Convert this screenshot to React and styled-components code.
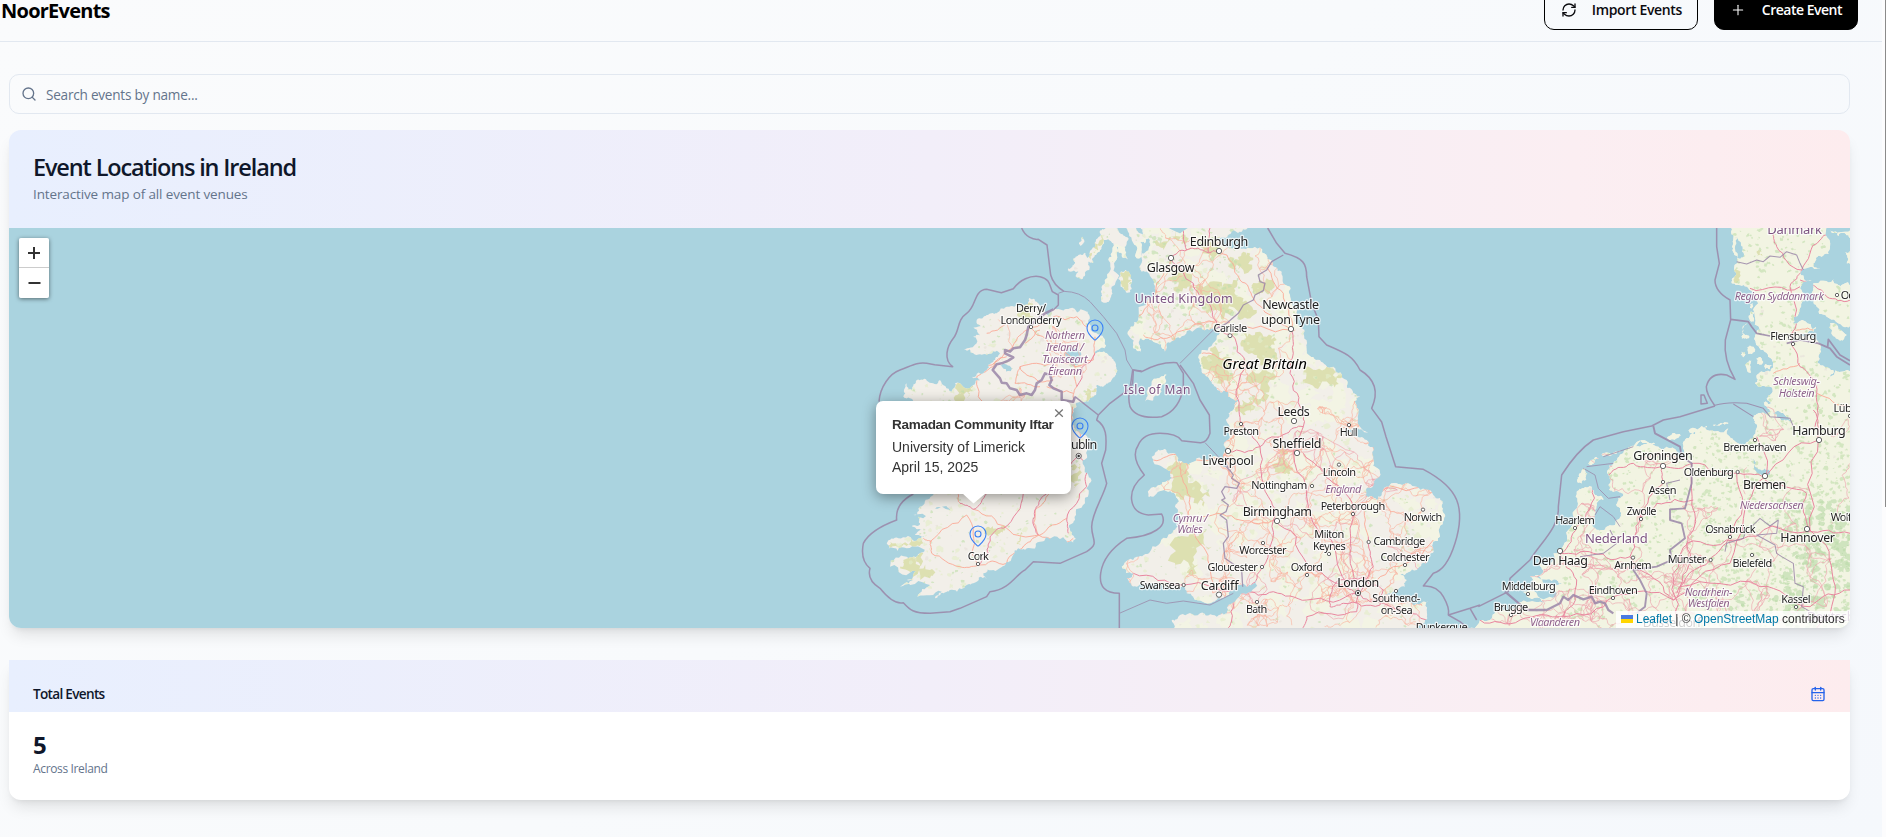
import React from "react";
import styled, { createGlobalStyle } from "styled-components";
import { RefreshCw, Plus, Search, CalendarDays, MapPin } from "lucide-react";

const GlobalStyle = createGlobalStyle`
  * { box-sizing: border-box; }
  body {
    margin: 0;
    overflow: hidden;
    background: #f9fafc;
    color: #0f172a;
    font-family: "Open Sans", "Noto Sans", sans-serif;
  }
`;

const Page = styled.div`
  display: flex;
  height: 837px;
  overflow: hidden;
`;

const Content = styled.div`
  flex: 1;
  min-width: 0;
  height: 837px;
  background: linear-gradient(135deg, #fafbfc 0%, #f8fafc 50%, #f5f8fc 100%);
`;

const ScrollTrack = styled.div`
  width: 4px;
  display: flex;
  justify-content: flex-end;
  background: #fcfcfd;
`;

const ScrollThumb = styled.div`
  width: 1px;
  height: 507px;
  background: #8b8b8b;
`;

const TopBar = styled.header`
  display: flex;
  align-items: flex-start;
  justify-content: space-between;
  height: 64px;
  margin-top: -22px;
  padding: 12px 24px 11px 1px;
  border-bottom: 1px solid #e2e8f0;
`;

const Brand = styled.div`
  padding-top: 7px;
  font-size: 20px;
  line-height: 28px;
  font-weight: 700;
  letter-spacing: -0.75px;
  color: #000;
`;

const Actions = styled.div`
  display: flex;
  gap: 16px;
`;

const Button = styled.button`
  display: flex;
  align-items: center;
  justify-content: space-between;
  width: ${(p) => p.$width}px;
  height: 40px;
  padding: 0 15px 0 ${(p) => (p.$solid ? 15 : 16)}px;
  border: 1px solid #000;
  border-radius: 10px;
  background: ${(p) => (p.$solid ? "#000" : "transparent")};
  color: ${(p) => (p.$solid ? "#fff" : "#0b0b0f")};
  font: 600 14px/20px "Open Sans", "Noto Sans", sans-serif;
  letter-spacing: ${(p) => p.$track}px;
  white-space: nowrap;
`;

const Main = styled.main`
  display: flex;
  flex-direction: column;
  width: 1841px;
  margin: 32px 0 0 9px;
`;

const SearchBox = styled.label`
  display: flex;
  align-items: center;
  gap: 9px;
  height: 40px;
  padding: 0 11px;
  border: 1px solid #e2e8f0;
  border-radius: 10px;
  color: #64748b;
  font-size: 13.6px;
  letter-spacing: -0.24px;
  svg { margin-top: -1px; }
  span { padding-top: 1px; }
`;

const gradient = "linear-gradient(90deg, #e8effe 0%, #f2eef9 50%, #fbeef2 85%, #fdecee 100%)";
const shadow = "0 10px 15px -3px rgba(0,0,0,0.1), 0 4px 6px -4px rgba(0,0,0,0.1)";

const MapCard = styled.section`
  margin-top: 16px;
  border-radius: 12px;
  overflow: hidden;
  box-shadow: ${shadow};
`;

const MapHeader = styled.div`
  height: 98px;
  padding: 23px 24px;
  background: ${gradient};
`;

const Title = styled.h2`
  margin: 0;
  font-size: 23.5px;
  line-height: 28px;
  font-weight: 600;
  letter-spacing: -1.15px;
`;

const Subtitle = styled.p`
  margin: 3px 0 0;
  font-size: 13.5px;
  line-height: 20px;
  letter-spacing: -0.13px;
  color: #64748b;
`;

const MapArea = styled.div`
  position: relative;
  height: 400px;
  background: #aad3df;
  overflow: hidden;
  font-family: "Liberation Sans", Arial, sans-serif;
`;

const MapDrawing = styled.svg`
  display: block;
`;

const Zoom = styled.div`
  position: absolute;
  top: 10px;
  left: 10px;
  display: flex;
  flex-direction: column;
  border-radius: 2px;
  overflow: hidden;
  box-shadow: 0 1px 4px rgba(0, 0, 0, 0.5);
`;

const ZoomButton = styled.div`
  display: flex;
  align-items: center;
  justify-content: center;
  width: 30px;
  height: 30px;
  background: #fff;
  border-bottom: ${(p) => (p.$divider ? "1px solid #ccc" : "0")};
`;

const Pin = styled(MapPin)`
  position: absolute;
  left: ${(p) => p.$x}px;
  top: ${(p) => p.$y}px;
  color: #3b82f6;
`;

const Popup = styled.div`
  position: absolute;
  left: 867px;
  top: 173px;
  width: 195px;
  height: 93px;
  padding: 14px 16px;
  border-radius: 7px;
  background: #fff;
  box-shadow: 0 3px 14px rgba(0, 0, 0, 0.4);
  color: #333;
  font-size: 14px;
  line-height: 20px;
`;

const PopupTitle = styled.div`
  margin-bottom: 2px;
  font-size: 13.5px;
  font-weight: 700;
  letter-spacing: -0.28px;
  white-space: nowrap;
`;

const PopupClose = styled.svg`
  position: absolute;
  right: 7px;
  top: 7px;
`;

const PopupTip = styled.svg`
  position: absolute;
  left: 86px;
  top: 92px;
`;

const Attribution = styled.div`
  position: absolute;
  right: 0;
  bottom: 0;
  display: flex;
  align-items: center;
  width: 234px;
  height: 17px;
  padding: 0 0 1px 5px;
  background: rgba(255, 255, 255, 0.8);
  color: #333;
  font-size: 12px;
  white-space: pre;
  a { color: #0078a8; }
  svg { margin-right: 3px; }
`;

const StatCard = styled.section`
  height: 140px;
  margin-top: 32px;
  border-radius: 0 0 12px 12px;
  background: #fff;
  box-shadow: ${shadow};
`;

const StatHeader = styled.div`
  display: flex;
  align-items: center;
  justify-content: space-between;
  height: 52px;
  padding: 15px 24px 0;
  background: ${gradient};
  font-size: 13.6px;
  font-weight: 600;
  letter-spacing: -0.7px;
`;

const StatBody = styled.div`
  padding: 17px 24px;
`;

const StatValue = styled.div`
  font-size: 24px;
  line-height: 32px;
  font-weight: 700;
`;

const StatNote = styled.div`
  font-size: 12px;
  line-height: 16px;
  letter-spacing: -0.35px;
  color: #64748b;
`;

/* ---------- map geometry ---------- */

// Sheets hold coordinates at triple scale, each relative to its own corner.
const SHEETS = { irl: [840, 220], gb: [1100, 220], eu: [1480, 420], dk: [1600, 220] };
const place = (sheet, x, y) => [SHEETS[sheet][0] + x / 3, SHEETS[sheet][1] + y / 3];

const random = (seed) => () => {
  seed = (seed * 1664525 + 1013904223) % 4294967296;
  return seed / 4294967296;
};

const parse = (sheet, text) =>
  text.trim().split(/\s+/).map((p) => place(sheet, ...p.split(",").map(Number)));

const roughen = (pts, rnd, amount, closed, depth = 2) => {
  let out = pts;
  for (let d = 0; d < depth; d++) {
    const next = [];
    out.forEach((a, i) => {
      next.push(a);
      const b = out[i + 1] || (closed ? out[0] : null);
      if (!b) return;
      const dx = b[0] - a[0];
      const dy = b[1] - a[1];
      const k = (rnd() - 0.5) * amount;
      next.push([a[0] + dx / 2 - dy * k, a[1] + dy / 2 + dx * k]);
    });
    out = next;
  }
  return out;
};

const toPath = (pts, closed) =>
  "M" + pts.map((p) => p[0].toFixed(1) + "," + p[1].toFixed(1)).join("L") + (closed ? "Z" : "");

const rndCoast = random(11);
const coast = (sheet, text) => toPath(roughen(parse(sheet, text), rndCoast, 0.55, true, 3), true);

const LAND = [
  coast("irl", "568,234 590,245 600,262 625,285 650,268 690,265 735,272 745,300 770,340 795,365 793,385 765,400 800,400 825,425 828,460 812,485 790,500 770,495 768,525 745,545 710,548 700,570 697,600 720,640 745,665 742,690 728,720 745,765 748,790 735,850 705,900 690,930 708,955 700,968 670,952 640,950 600,965 560,985 535,985 520,1005 500,1025 460,1050 430,1060 440,1075 400,1090 370,1105 330,1110 310,1120 285,1135 305,1115 232,1130 270,1095 180,1100 240,1070 200,1080 230,1055 150,1040 200,1010 240,1000 270,980 200,985 145,988 140,970 175,955 230,962 265,955 225,945 245,930 215,918 240,910 235,890 330,870 320,858 220,885 250,855 280,825 300,750 250,700 180,650 240,560 210,535 190,530 200,490 215,510 230,480 265,485 300,480 335,515 345,490 400,495 420,480 395,470 440,450 460,425 480,400 440,405 400,400 372,390 410,370 400,350 420,345 400,320 430,320 410,300 440,285 470,280 500,260 530,255 545,262 565,250"),
  coast("gb", "120,10 360,10 460,10 430,28 395,35 350,55 370,75 400,85 450,85 500,105 515,125 545,155 570,200 575,250 590,310 610,340 620,400 660,420 700,440 740,480 760,520 780,530 765,545 775,580 780,620 805,640 760,625 720,630 760,645 800,660 820,710 840,755 825,780 800,805 795,825 830,840 845,825 860,800 900,793 950,800 1000,825 1025,855 1032,900 1020,950 1000,990 985,1020 950,1050 900,1065 920,1080 915,1100 880,1115 850,1125 890,1140 930,1145 985,1145 980,1170 975,1200 950,1240 930,1700 200,1700 215,1240 215,1200 240,1185 300,1180 350,1190 380,1180 385,1155 430,1120 470,1080 440,1100 400,1110 370,1135 340,1145 280,1130 250,1100 200,1100 150,1090 110,1100 80,1075 100,1060 65,1040 110,1010 150,995 200,955 235,920 240,890 225,860 235,840 205,815 160,830 145,830 180,795 215,775 215,750 160,725 155,710 185,690 210,700 235,725 290,715 350,710 370,740 400,745 370,715 385,690 370,675 385,660 378,600 385,580 400,570 415,540 385,530 380,515 350,505 335,490 325,470 305,450 300,420 305,390 350,350 360,340 340,325 290,325 240,355 200,370 195,395 160,365 120,355 125,400 100,375 88,330 100,320 115,300 145,235 165,200 155,175 125,155 125,100 150,70 130,50"),
  coast("gb", "45,10 60,40 85,60 75,90 85,120 65,100 50,80 42,130 35,200 30,240 5,245 5,220 15,190 25,120 40,70 15,60 0,40 20,20"),
  coast("gb", "70,10 110,10 120,40 135,70 120,65 125,110 110,115 95,60"),
  coast("gb", "62,155 75,150 92,165 95,205 80,218 62,200 55,175"),
  coast("gb", "200,465 198,485 185,495 160,540 135,545 140,512 150,500 178,475"),
  coast("irl", "785,45 795,42 792,70 770,100 760,128 742,125 748,100 765,80"),
  coast("irl", "735,98 745,120 748,150 725,178 710,172 715,155 690,155 685,145 705,130 700,115 715,105"),
  coast("irl", "728,50 733,60 722,78 717,72"),
  coast("eu", "-60,630 0,600 45,580 90,575 150,545 200,550 140,530 130,515 160,490 150,470 190,450 180,430 240,390 265,330 285,270 290,215 310,205 335,200 345,225 370,240 345,270 340,310 350,330 380,320 410,300 420,270 415,235 435,215 400,215 385,195 390,170 385,150 400,130 430,100 480,80 520,75 560,80 590,95 600,115 620,110 610,75 630,45 680,30 745,25 760,60 775,70 805,65 820,50 825,10 820,-10 840,-20 900,-5 935,10 930,0 900,-25 860,-40 850,-55 875,-50 860,-65 870,-100 825,-110 830,-135 870,-145 880,-170 850,-210 825,-250 840,-270 835,-350 810,-390 790,-405 755,-410 768,-440 772,-470 762,-500 760,-540 758,-590 850,-640 1055,-590 1050,-520 1025,-490 1000,-470 1020,-455 960,-440 995,-420 960,-395 970,-360 945,-310 940,-290 1000,-270 960,-260 1010,-240 1020,-200 1010,-170 1060,-150 1050,-130 1130,-130 1600,-130 1600,1300 -60,1300"),
  coast("dk", "640,190 700,178 720,200 770,195 770,310 735,322 680,290 650,260 635,220"),
  coast("dk", "690,30 760,24 750,55 735,40 715,48"),
  coast("dk", "735,95 760,90 760,135 740,130"),
  coast("dk", "600,305 650,320 640,335 605,322"),
  coast("dk", "690,310 740,345 720,362 695,335"),
  coast("dk", "452,275 462,278 460,305 450,300"),
  coast("dk", "440,310 436,345 448,352 425,358 430,330"),
  coast("dk", "440,382 460,380 464,395 445,402"),
  coast("dk", "470,415 482,412 488,430 472,432"),
  coast("dk", "498,432 515,435 510,448 495,446"),
  coast("dk", "450,252 458,250 456,264 450,264"),
  coast("dk", "425,395 435,398 430,412"),
  coast("dk", "448,422 454,422 453,458 448,458"),
  coast("eu", "315,145 322,160 305,190 295,188 298,170"),
  coast("eu", "325,132 350,112 356,115 335,135"),
  coast("eu", "365,102 420,92 420,97 368,108"),
  coast("eu", "445,82 520,68 525,72 450,88"),
  coast("eu", "560,55 600,42 604,46 570,60"),
  coast("eu", "625,32 680,18 680,22 630,38"),
  coast("eu", "700,14 745,8 745,12 702,18"),
];

const WATER = [
  coast("irl", "678,390 705,385 722,395 720,425 700,440 685,425 675,405"),
  coast("irl", "480,435 515,445 500,455"),
  coast("eu", "350,250 385,265 400,290 375,315 345,325 338,300"),
  coast("eu", "170,470 230,480 245,490 200,495"),
  coast("eu", "150,500 210,510 230,520 170,520"),
  coast("eu", "812,115 822,118 835,148 870,155 865,165 825,150"),
  coast("dk", "410,50 428,80 430,110 415,115 405,80"),
];

const BORDERS = [
  ["irl", 1.2, "M545,24C555,50 580,60 595,58L621,75 632,165Q640,195 672,214"],
  ["irl", 1.2, "M117,545C120,500 150,460 180,450S230,425 260,430L284,434L338,440C310,420 320,380 340,355S350,300 380,280S400,210 440,208L484,218 520,206C540,180 570,165 600,170S630,200 637,215L655,225 655,255 640,270"],
  ["irl", 2, "M640,268L615,280 590,300 565,320 560,345 555,360 540,382 520,385 510,395 495,390 495,400 520,412 505,422 485,430 470,433 458,450 480,475 485,488 500,490 510,505 530,510 540,525 560,520 575,525 585,510 590,490 605,480 615,460 630,465 635,480 628,495 640,505 665,515 665,540 700,545 705,530"],
  ["irl", 1.2, "M705,530L775,585 770,600C800,620 800,650 797,690L785,730 800,790C790,830 755,880 755,920S780,970 740,995L660,1030 580,1025 555,1050C530,1060 510,1110 450,1115L440,1130 360,1165 330,1175 270,1180C220,1180 210,1170 190,1148Q160,1155 120,1105Q80,1080 90,1045Q60,1020 70,970Q90,930 170,900Q165,850 220,822"],
  ["irl", 0.7, "M655,220L672,214Q720,215 750,245L790,290 830,340 855,390 860,420 878,450"],
  ["irl", 1.2, "M905,453L878,450 870,505 810,550 775,585"],
  ["gb", 1.2, "M100,450L125,455Q180,425 230,428L250,460 250,500Q240,570 185,590Q110,600 90,560Q80,520 98,490Z"],
  ["gb", 1.2, "M240,435L280,490 300,540 328,585 330,640Q320,670 300,668L245,662Q230,640 180,640T115,675Q90,710 133,765Q90,800 95,840T145,885L185,882Q200,910 170,930T80,955Q10,1000 2,1060T58,1120V1230"],
  ["gb", 0.7, "M58,1180L150,1140 200,1150 250,1143 330,1155 400,1120"],
  ["gb", 0.7, "M315,668L350,705 390,755"],
  ["gb", 1.2, "M503,24L530,70 555,100C610,115 620,130 620,170L635,250 655,300 657,350 680,375C740,400 760,410 780,450C830,480 835,520 815,565L845,606 858,650 887,740 970,748Q1050,790 1070,840T1065,970T1000,1060L970,1098Q1010,1095 1030,1130T1045,1185L1110,1165 1140,1155"],
  ["gb", 1, "M550,105L515,125 500,150 475,165 480,185 495,190 490,212 465,225 460,240 430,255 415,280 380,310 340,330"],
  ["gb", 0.7, "M340,330L300,370 240,430"],
  ["gb", 1, "M375,730L400,765 395,775 418,790 410,805 375,800 365,815 375,835 365,840 385,855 378,875 360,885 380,900 385,950 370,970 375,1015 425,1050 428,1100"],
  ["gb", 1.2, "M1045,1185L1080,1205 1110,1230M1110,1165L1130,1200"],
  ["eu", 1.2, "M-5,560L85,515 90,475 150,420C180,370 240,320 235,260L245,165C280,110 310,80 340,60L430,35 515,18 550,0 600,-10 705,-42"],
  ["eu", 1.5, "M520,18L525,40 600,80 605,110 635,130 635,190 615,265 570,268 570,300 605,310 615,355 570,390 575,420 530,440 460,450 480,480 500,520 495,560 470,580"],
  ["eu", 1.8, "M75,515L140,570 200,570 240,550 250,530 265,540 280,525 310,538 335,530 345,550 360,545 375,550 385,570 400,580"],
  ["eu", 0.7, "M310,145L345,165 355,205 385,235 420,230M345,285L360,260 400,290 420,320M400,130L320,140M370,110L460,80"],
  ["eu", 0.8, "M735,395L740,370 790,355 800,325 820,315 840,295 870,318 895,300 890,340 830,345 885,375 890,400 905,410 940,430 945,490 970,500 965,560 1000,580M570,240L560,190 600,180M390,330L410,370 370,400 300,410"],
  ["dk", 1.2, "M345,558Q318,520 319,500Q330,455 380,465L405,478Q370,420 376,360L392,300 390,240Q345,215 345,180L358,130 350,80 350,24"],
  ["dk", 1.2, "M303,525L312,525 322,550 303,552Z"],
  ["dk", 1.4, "M392,298L445,305 455,320 470,340 510,348M560,370L600,360 655,370 690,385 710,410 750,435M683,380L685,358 720,405 750,422"],
  ["dk", 0.8, "M410,125L440,132 470,120 490,125 510,108 540,112 560,95 590,105 600,130 610,150M345,556Q380,545 440,550L490,565 510,590 570,595 580,620M400,552L460,590"],
];

const rndRoad = random(77);
const route = (sheet, text) =>
  text
    .split("M")
    .filter(Boolean)
    .map((part) => toPath(roughen(parse(sheet, part), rndRoad, 0.3, false, 3), false))
    .join("");

const IRISH_ROADS = [
  route("irl", "M697,548 710,500 705,440 760,420 765,350M705,440 640,430 540,440 525,490M573,322 640,290 710,290 740,320M573,322 530,360 460,440 410,470 415,530 480,560M540,440 590,480 640,480M555,370 600,330M697,560 720,640 720,680M573,322 620,360 705,440M620,500 700,520M525,490 600,500M500,310 440,340M500,410 440,440"),
  route("irl", "M640,810 585,870 595,945M380,885 395,1000 414,1035M400,868 500,925 595,945 700,955M414,1035 500,1030 560,970 600,945 680,895M380,885 270,965 275,1000 360,1040 414,1035M275,965 250,955M360,850 355,820"),
];

const ROADS = [
  route("irl", "M715,700 660,760 600,840 585,870M715,700 742,740 740,800 680,900 685,940M360,850 400,868 440,820 550,800M414,1035 445,1000 450,950 490,925 550,820M585,870 595,945M765,400 710,500"),
  route("gb", "M213,115 260,90 325,98 355,92M325,98 330,24M260,90 250,24M213,115 280,190 325,250 350,305 395,345 440,440 415,540 425,610 480,680 505,830 520,900M480,680 560,640 610,620 600,560 570,460 580,400 573,330"),
  route("gb", "M480,680 385,695M610,620 620,830 750,1100M520,900 620,1030 735,1100 775,1120M520,900 485,1045 430,1110 250,1095 100,1060M430,1110 520,1115 620,1140 775,1120M775,1120 750,1000 760,880 690,780 610,700M775,1120 820,1040 805,950M430,1110 395,1200 370,1240M775,1120 850,1150 980,1200M775,1120 770,1175 620,1190 600,1240M690,1160 730,1150 840,1155 850,1110 790,1070 720,1080 690,1130 690,1160"),
  route("eu", "M0,600 120,600 250,590 290,480 240,400 290,320 340,200 400,150 460,130 548,138 640,130 770,160 855,170 1015,60 1000,-30M548,138 550,190 480,290 450,410 340,400 240,400M450,410 480,450 580,540 600,500 620,370 780,360 980,335 1110,340M580,540 750,430 855,170M855,180 980,220 990,330 1015,60M600,500 840,500 990,560 1110,510M480,290 530,250 640,240M635,130 640,330 600,420 590,600M250,590 400,530 580,540M990,330 1060,480 1010,624M770,160 750,350 690,420 590,520M855,170 830,50"),
  route("dk", "M605,150 570,200 575,340 600,440 650,520 645,620M605,150 530,80 520,40M605,150 660,60 690,24M600,200 450,205M600,180 680,230 750,240"),
];

const SIDE_ROADS = [
  route("gb", "M355,92 420,180 460,235 570,325M500,140 550,220 575,325M395,345 573,330M213,115 170,190 115,290M350,305 290,310 200,355 130,345M440,440 330,400 305,400M385,695 290,720 240,700 160,720M775,1120 880,1040 1000,960M805,950 780,850 970,800M240,740 270,830 260,900 310,980 340,1090M310,890 420,900 530,900"),
  route("dk", "M650,520 750,560M600,430 520,460M575,340 640,330"),
];

// Secondary road mesh: scattered junctions joined to their nearest neighbours.
const mesh = (seed, x0, y0, x1, y1, count, reach) => {
  const rnd = random(seed);
  const nodes = Array.from({ length: count }, () => [x0 + rnd() * (x1 - x0), y0 + rnd() * (y1 - y0)]);
  let d = "";
  nodes.forEach((a, i) => {
    nodes
      .map((b, j) => [Math.hypot(a[0] - b[0], a[1] - b[1]), j])
      .filter((n) => n[1] > i && n[0] < reach)
      .sort((p, q) => p[0] - q[0])
      .slice(0, 3)
      .forEach((n) => {
        d += toPath(roughen([a, nodes[n[1]]], rnd, 0.5, false, 3), false);
      });
  });
  return d;
};

const MINOR = [
  mesh(5, 990, 300, 1115, 420, 18, 34),
  mesh(7, 1130, 228, 1300, 420, 60, 34),
  mesh(9, 1215, 400, 1450, 628, 300, 24),
  mesh(10, 1120, 450, 1230, 600, 40, 28),
];
const MAJOR = [
  mesh(21, 1225, 430, 1440, 628, 40, 42),
  mesh(23, 1570, 450, 1850, 628, 90, 34),
  mesh(27, 1730, 400, 1850, 450, 10, 38),
  mesh(29, 1480, 560, 1700, 628, 70, 24),
];

const patches = (seed, x0, y0, x1, y1, count, size) => {
  const rnd = random(seed);
  let d = "";
  for (let i = 0; i < count; i++) {
    const cx = x0 + rnd() * (x1 - x0);
    const cy = y0 + rnd() * (y1 - y0);
    const r = size * (0.3 + rnd());
    const pts = Array.from({ length: 6 }, (_, k) => {
      const t = (k / 6) * Math.PI * 2;
      const q = r * (0.4 + rnd() * 0.8);
      return [cx + Math.cos(t) * q * 1.2, cy + Math.sin(t) * q];
    });
    d += toPath(roughen(pts, rnd, 0.7, true, 1), true);
  }
  return d;
};

const CREAM = patches(30, 1100, 228, 1500, 628, 600, 9);
const FIELDS = patches(31, 890, 228, 1500, 628, 1100, 2.6);
const WOODS =
  patches(33, 1700, 228, 1850, 628, 1100, 1.9) +
  patches(35, 1560, 440, 1850, 628, 900, 1.8) +
  patches(37, 890, 228, 1450, 628, 1100, 1.4) +
  patches(38, 1130, 228, 1240, 350, 160, 2);
const FOREST = patches(39, 1780, 500, 1850, 628, 160, 4) + patches(40, 1690, 590, 1790, 628, 50, 3);
const TOWNS = patches(43, 890, 228, 1850, 628, 400, 1.8);

const rndHill = random(51);
const hill = (sheet, text) => toPath(roughen(parse(sheet, text), rndHill, 1.1, true, 3), true);
const HILLS = [
  hill("gb", "200,180 260,160 330,185 400,180 410,230 370,300 345,270 320,280 300,230 280,200 220,210"),
  hill("gb", "390,110 430,95 460,120 430,150 385,140"),
  hill("gb", "170,60 245,50 255,75 190,90"),
  hill("gb", "290,60 360,50 350,75 300,80"),
  hill("gb", "430,340 480,335 530,360 530,400 510,420 530,470 500,540 460,530 450,460 480,420 430,380"),
  hill("gb", "320,410 350,385 385,410 400,460 350,490 325,450"),
  hill("gb", "615,445 680,440 730,470 690,495 620,490"),
  hill("gb", "425,540 460,535 460,570 425,580"),
  hill("gb", "60,160 80,152 95,180 80,212 60,190"),
  hill("gb", "530,680 560,690 575,740 550,760 525,730"),
  hill("gb", "240,730 270,735 265,790 330,830 310,860 250,840 215,790"),
  hill("gb", "265,950 320,930 335,980 280,1010 290,1060 230,1050"),
  hill("gb", "360,260 420,230 470,270 420,300"),
  hill("gb", "470,190 500,175 510,220 480,230"),
  hill("irl", "345,505 400,500 395,540 350,545"),
  hill("irl", "545,260 580,240 580,290 555,300"),
  hill("irl", "735,515 768,505 765,535 740,545"),
  hill("irl", "690,740 715,730 720,790 700,805"),
  hill("irl", "445,920 490,915 480,940 450,945"),
  hill("irl", "530,940 545,935 540,975 528,970"),
  hill("irl", "150,965 215,955 250,970 200,978 150,985"),
  hill("irl", "190,1020 250,1000 240,1040 180,1045"),
  hill("irl", "215,1070 270,1050 270,1075 215,1085"),
  hill("irl", "785,45 792,60 765,100 750,120 752,100"),
  hill("dk", "470,95 485,95 488,108 472,108"),
  hill("dk", "400,180 412,150 418,185"),
];

// name, sheet, centre x, baseline y, width, font size, kind
const LABELS = [
  ["Derry/", "irl", 573, 275, 90, 11], ["Londonderry", "irl", 573, 311, 183, 11],
  ["Northern", "irl", 675, 357, 120, 11, "region"], ["Ireland /", "irl", 675, 392, 114, 11, "region"],
  ["Tuaisceart", "irl", 675, 428, 136, 11, "region"], ["Éireann", "irl", 675, 464, 102, 11, "region"],
  ["Dublin", "irl", 720, 687, 104, 12.5], ["Cork", "irl", 415, 1020, 64, 11],
  ["Edinburgh", "gb", 357, 77, 175, 12.5], ["Glasgow", "gb", 212, 157, 143, 12.5],
  ["United Kingdom", "gb", 251, 248, 294, 12.5, "country"], ["Newcastle", "gb", 572, 266, 171, 12.5],
  ["upon Tyne", "gb", 572, 312, 176, 12.5], ["Carlisle", "gb", 391, 335, 101, 11],
  ["Great Britain", "gb", 494, 446, 254, 15, "island"], ["Isle of Man", "gb", 171, 522, 200, 12, "country"],
  ["Leeds", "gb", 581, 588, 97, 12.5], ["Preston", "gb", 424, 645, 107, 11], ["Hull", "gb", 746, 648, 54, 11],
  ["Sheffield", "gb", 591, 684, 147, 12.5], ["Liverpool", "gb", 384, 736, 155, 12.5],
  ["Lincoln", "gb", 718, 767, 100, 11], ["Nottingham", "gb", 538, 808, 168, 11],
  ["England", "gb", 730, 818, 108, 11, "region"], ["Peterborough", "gb", 759, 870, 194, 11],
  ["Birmingham", "gb", 532, 888, 208, 12.5], ["Norwich", "gb", 969, 903, 116, 11],
  ["Cymru /", "gb", 271, 905, 106, 11, "region"], ["Wales", "gb", 270, 940, 76, 11, "region"],
  ["Milton", "gb", 688, 953, 90, 11], ["Keynes", "gb", 688, 990, 98, 11],
  ["Worcester", "gb", 489, 1001, 142, 11], ["Cambridge", "gb", 898, 976, 155, 11],
  ["Colchester", "gb", 915, 1023, 147, 11], ["Gloucester", "gb", 398, 1052, 151, 11],
  ["Oxford", "gb", 620, 1053, 96, 11], ["London", "gb", 775, 1101, 126, 12.5],
  ["Swansea", "gb", 180, 1106, 122, 11], ["Cardiff", "gb", 359, 1110, 113, 12.5],
  ["Bath", "gb", 470, 1179, 64, 11], ["Southend-", "gb", 889, 1147, 144, 11],
  ["on-Sea", "gb", 890, 1183, 96, 11], ["Dunkerque", "gb", 1025, 1233, 156, 11],
  ["Groningen", "eu", 549, 121, 178, 12.5], ["Oldenburg", "eu", 686, 167, 150, 11],
  ["Bremerhaven", "eu", 825, 94, 190, 11], ["Hamburg", "eu", 1017, 45, 160, 12.5],
  ["Bremen", "eu", 854, 208, 130, 12.5], ["Assen", "eu", 548, 221, 83, 11],
  ["Niedersachsen", "eu", 875, 268, 192, 11, "region"], ["Zwolle", "eu", 485, 285, 89, 11],
  ["Wolfsburg", "eu", 1122, 304, 140, 11], ["Haarlem", "eu", 285, 312, 119, 11],
  ["Osnabrück", "eu", 751, 338, 151, 11], ["Nederland", "eu", 409, 368, 188, 13, "country"],
  ["Hannover", "eu", 983, 367, 164, 12.5], ["Münster", "eu", 621, 430, 116, 11],
  ["Den Haag", "eu", 241, 435, 165, 12.5], ["Arnhem", "eu", 459, 447, 112, 11],
  ["Bielefeld", "eu", 817, 441, 119, 11], ["Middelburg", "eu", 146, 509, 162, 11],
  ["Eindhoven", "eu", 400, 522, 147, 11], ["Nordrhein-", "eu", 686, 527, 143, 11, "region"],
  ["Westfalen", "eu", 686, 562, 126, 11, "region"], ["Kassel", "eu", 948, 549, 88, 11],
  ["Brugge", "eu", 93, 573, 103, 11], ["Vlaanderen", "eu", 225, 618, 150, 11, "region"],
  ["Düsseldorf", "eu", 576, 622, 176, 12.5], ["Deutschland", "eu", 1090, 603, 220, 13, "country"],
  ["Danmark", "dk", 584, 43, 164, 13, "country"], ["Region Syddanmark", "dk", 538, 241, 267, 11, "region"],
  ["Odense", "dk", 774, 237, 104, 11], ["Flensburg", "dk", 580, 361, 138, 11],
  ["Schleswig-", "dk", 590, 495, 140, 11, "region"], ["Holstein", "dk", 590, 531, 108, 11, "region"],
  ["Lübeck", "dk", 752, 576, 103, 11],
];

const TOWN_DOTS = [
  ["irl", 573, 321, 5], ["irl", 414, 1032, 5], ["irl", 716, 708, 8, 1], ["gb", 213, 114, 8], ["gb", 357, 93, 8],
  ["gb", 573, 327, 8], ["gb", 390, 347, 6], ["gb", 582, 603, 8], ["gb", 423, 612, 5], ["gb", 747, 615, 5],
  ["gb", 591, 699, 8], ["gb", 384, 693, 8], ["gb", 717, 734, 5], ["gb", 636, 798, 5], ["gb", 759, 882, 5],
  ["gb", 531, 903, 8], ["gb", 969, 869, 5], ["gb", 489, 969, 5], ["gb", 806, 966, 5], ["gb", 687, 1002, 5],
  ["gb", 915, 1035, 5], ["gb", 486, 1041, 5], ["gb", 621, 1065, 5], ["gb", 774, 1119, 8, 1], ["gb", 251, 1095, 5],
  ["gb", 357, 1124, 8], ["gb", 471, 1146, 5], ["gb", 888, 1113, 5], ["eu", 549, 138, 8], ["eu", 773, 156, 5],
  ["eu", 825, 60, 5], ["eu", 1017, 60, 8], ["eu", 855, 168, 8], ["eu", 549, 186, 5], ["eu", 483, 297, 5],
  ["eu", 285, 324, 5], ["eu", 750, 351, 5], ["eu", 981, 327, 8], ["eu", 692, 420, 5], ["eu", 240, 393, 8],
  ["eu", 459, 413, 5], ["eu", 816, 405, 5], ["eu", 144, 522, 5], ["eu", 399, 534, 5], ["eu", 948, 561, 5],
  ["eu", 93, 585, 5], ["dk", 711, 225, 5], ["dk", 579, 372, 5], ["dk", 750, 588, 5],
];

const INK = { region: "#8d618b", country: "#7d5482", island: "#000", city: "#222" };

const sheetTransform = (s) => `translate(${SHEETS[s][0]} ${SHEETS[s][1]}) scale(${1 / 3})`;

function BaseMap() {
  return (
    <MapDrawing width="1841" height="400" viewBox="9 228 1841 400">
      <defs>
        <clipPath id="land">
          {LAND.map((d, i) => <path key={i} d={d} />)}
        </clipPath>
      </defs>
      {LAND.map((d, i) => <path key={i} d={d} fill="#f2efe9" />)}
      <g clipPath="url(#land)">
        <path d={CREAM} fill="#f3f5e2" opacity="0.8" />
        <path d="M1560 228H1860V640H1460V500Z" fill="#f2f4e2" />
        <path d={TOWNS} fill="#e8e2dc" opacity="0.7" />
        {HILLS.map((d, i) => <path key={i} d={d} fill="#dde0b1" />)}
        <path d={FIELDS} fill="#e3ecc9" opacity="0.65" />
        <path d={WOODS} fill="#c2deae" opacity="0.65" />
        <path d={FOREST} fill="#b7d8a6" opacity="0.6" />
        {WATER.map((d, i) => <path key={i} d={d} fill="#aad3df" />)}
        <g fill="none" strokeLinejoin="round">
          {MINOR.map((d, i) => <path key={i} d={d} stroke="#fbb3a0" strokeWidth="0.7" opacity="0.9" />)}
          {MAJOR.map((d, i) => <path key={i} d={d} stroke="#eda4ad" strokeWidth="0.75" opacity="0.85" />)}
          {[...IRISH_ROADS, ...SIDE_ROADS].map((d, i) => <path key={i} d={d} stroke="#faa996" strokeWidth="0.9" />)}
          {ROADS.map((d, i) => <path key={i} d={d} stroke="#e8879f" strokeWidth="1" />)}
        </g>
      </g>
      <g fill="none" stroke="#9a86a8" strokeLinejoin="round" opacity="0.85">
        {BORDERS.map(([s, w, d], i) => (
          <path key={i} d={d} transform={sheetTransform(s)} strokeWidth={w * 3.8} />
        ))}
      </g>
      {TOWN_DOTS.map(([s, x, y, r, capital], i) => {
        const [cx, cy] = place(s, x, y);
        return (
          <g key={i}>
            <circle cx={cx} cy={cy} r={r / 3} fill="#fff" stroke="#555" strokeWidth="0.9" />
            {capital && <circle cx={cx} cy={cy} r="1.2" fill="#333" />}
          </g>
        );
      })}
      <g fontFamily="'Noto Sans', 'Open Sans', sans-serif" textAnchor="middle" stroke="#fff" strokeOpacity="0.75" strokeWidth="2.4" strokeLinejoin="round" paintOrder="stroke">
        {LABELS.map(([text, s, x, y, w, size, kind = "city"]) => {
          const [cx, cy] = place(s, x, y);
          return (
            <text
              key={text}
              x={cx}
              y={cy}
              textLength={w / 3}
              fontSize={size}
              fontStyle={kind === "region" || kind === "island" ? "italic" : "normal"}
              fill={INK[kind]}
            >
              {text}
            </text>
          );
        })}
      </g>
    </MapDrawing>
  );
}

const VENUES = [
  { x: 1074, y: 89.5 },
  { x: 1059, y: 187.5 },
  { x: 957, y: 295.5 },
];

export default function App() {
  return (
    <>
      <GlobalStyle />
      <Page>
        <Content>
          <TopBar>
            <Brand>NoorEvents</Brand>
            <Actions>
              <Button $width={154} $track={-0.35}>
                <RefreshCw size={16} strokeWidth={2} />
                Import Events
              </Button>
              <Button $width={144} $solid $track={-0.5}>
                <Plus size={16} strokeWidth={1.6} />
                Create Event
              </Button>
            </Actions>
          </TopBar>
          <Main>
            <SearchBox>
              <Search size={16} />
              <span>Search events by name...</span>
            </SearchBox>
            <MapCard>
              <MapHeader>
                <Title>Event Locations in Ireland</Title>
                <Subtitle>Interactive map of all event venues</Subtitle>
              </MapHeader>
              <MapArea>
                <BaseMap />
                {VENUES.map((v) => (
                  <Pin key={v.x} $x={v.x} $y={v.y} size={24} strokeWidth={1.1} />
                ))}
                <Popup>
                  <PopupTip width="40" height="14" viewBox="0 0 40 14">
                    <path d="M0 0H24L11.500 10.500L0 0Z" fill="#fff" />
                  </PopupTip>
                  <PopupTitle>Ramadan Community Iftar</PopupTitle>
                  <div>University of Limerick</div>
                  <div>April 15, 2025</div>
                  <PopupClose width="10" height="10" viewBox="0 0 10 10">
                    <path d="M1.200 1.500L8.800 8.800M8.800 1.500L1.200 8.800" stroke="#757575" strokeWidth="1.300" />
                  </PopupClose>
                </Popup>
                <Zoom>
                  <ZoomButton $divider>
                    <svg width="14" height="14" viewBox="0 0 14 14">
                      <path d="M1 7H13M7 1V13" stroke="#333" strokeWidth="2" />
                    </svg>
                  </ZoomButton>
                  <ZoomButton>
                    <svg width="14" height="14" viewBox="0 0 14 14">
                      <path d="M1.500 7H13.500" stroke="#333" strokeWidth="2" />
                    </svg>
                  </ZoomButton>
                </Zoom>
                <Attribution>
                  <svg width="12" height="8" viewBox="0 0 12 8">
                    <path fill="#4c7be1" d="M0 0h12v4H0z" />
                    <path fill="#ffd500" d="M0 4h12v4H0z" />
                  </svg>
                  <a>Leaflet</a>
                  <span> | © </span>
                  <a>OpenStreetMap</a>
                  <span> contributors</span>
                </Attribution>
              </MapArea>
            </MapCard>
            <StatCard>
              <StatHeader>
                Total Events
                <CalendarDays size={16} color="#2563eb" />
              </StatHeader>
              <StatBody>
                <StatValue>5</StatValue>
                <StatNote>Across Ireland</StatNote>
              </StatBody>
            </StatCard>
          </Main>
        </Content>
        <ScrollTrack>
          <ScrollThumb />
        </ScrollTrack>
      </Page>
    </>
  );
}
